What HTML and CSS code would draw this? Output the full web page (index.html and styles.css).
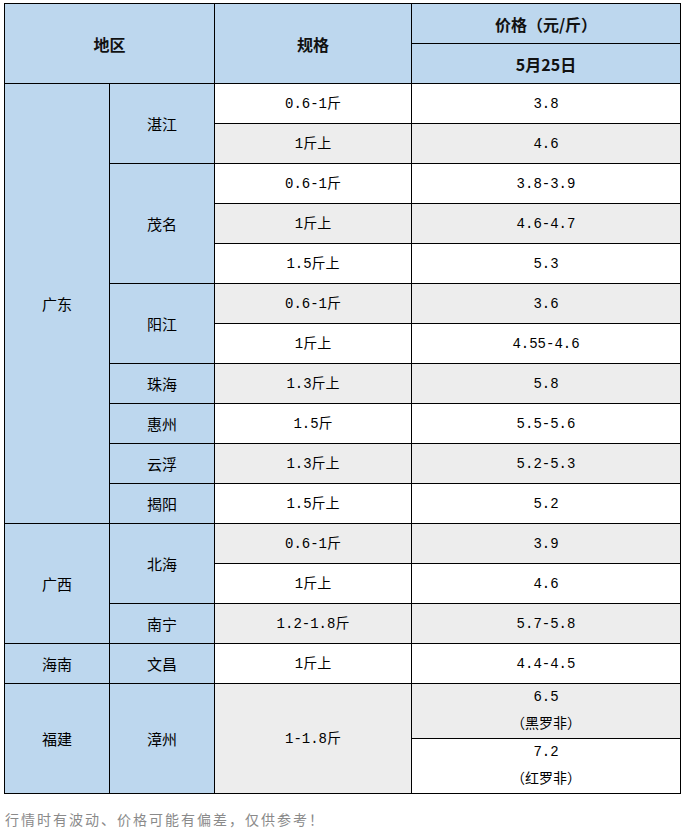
FILE: index.html
```html
<!DOCTYPE html>
<html lang="zh-CN">
<head>
<meta charset="utf-8">
<title>价格表</title>
<link rel="stylesheet" href="styles.css">
</head>
<body>
<table class="price-table">
  <colgroup>
    <col class="c-region">
    <col class="c-city">
    <col class="c-spec">
    <col class="c-price">
  </colgroup>
  <thead>
    <tr>
      <th rowspan="2" colspan="2">地区</th>
      <th rowspan="2">规格</th>
      <th>价格（元/斤）</th>
    </tr>
    <tr>
      <th>5月25日</th>
    </tr>
  </thead>
  <tbody>
    <tr>
      <td class="blue" rowspan="11">广东</td>
      <td class="blue" rowspan="2">湛江</td>
      <td>0.6-1斤</td>
      <td>3.8</td>
    </tr>
    <tr class="gray">
      <td>1斤上</td>
      <td>4.6</td>
    </tr>
    <tr>
      <td class="blue" rowspan="3">茂名</td>
      <td>0.6-1斤</td>
      <td>3.8-3.9</td>
    </tr>
    <tr class="gray">
      <td>1斤上</td>
      <td>4.6-4.7</td>
    </tr>
    <tr>
      <td>1.5斤上</td>
      <td>5.3</td>
    </tr>
    <tr class="gray">
      <td class="blue" rowspan="2">阳江</td>
      <td>0.6-1斤</td>
      <td>3.6</td>
    </tr>
    <tr>
      <td>1斤上</td>
      <td>4.55-4.6</td>
    </tr>
    <tr class="gray">
      <td class="blue">珠海</td>
      <td>1.3斤上</td>
      <td>5.8</td>
    </tr>
    <tr>
      <td class="blue">惠州</td>
      <td>1.5斤</td>
      <td>5.5-5.6</td>
    </tr>
    <tr class="gray">
      <td class="blue">云浮</td>
      <td>1.3斤上</td>
      <td>5.2-5.3</td>
    </tr>
    <tr>
      <td class="blue">揭阳</td>
      <td>1.5斤上</td>
      <td>5.2</td>
    </tr>
    <tr class="gray">
      <td class="blue" rowspan="3">广西</td>
      <td class="blue" rowspan="2">北海</td>
      <td>0.6-1斤</td>
      <td>3.9</td>
    </tr>
    <tr>
      <td>1斤上</td>
      <td>4.6</td>
    </tr>
    <tr class="gray">
      <td class="blue">南宁</td>
      <td>1.2-1.8斤</td>
      <td>5.7-5.8</td>
    </tr>
    <tr>
      <td class="blue">海南</td>
      <td class="blue">文昌</td>
      <td>1斤上</td>
      <td>4.4-4.5</td>
    </tr>
    <tr class="gray tall">
      <td class="blue" rowspan="2">福建</td>
      <td class="blue" rowspan="2">漳州</td>
      <td rowspan="2">1-1.8斤</td>
      <td class="two-line">6.5<br>（黑罗非）</td>
    </tr>
    <tr class="tall">
      <td class="two-line">7.2<br>（红罗非）</td>
    </tr>
  </tbody>
</table>
<p class="note">行情时有波动、价格可能有偏差，仅供参考！</p>
</body>
</html>
```

FILE: styles.css
```css
html, body {
  background: #ffffff;
}

body {
  margin: 3px 0 0 4px;
  font-family: "Liberation Mono", "Noto Sans CJK SC", monospace;
  font-size: 14px;
  color: #000000;
}

.price-table {
  border-collapse: collapse;
  table-layout: fixed;
  width: 677px;
}

.c-region { width: 105px; }
.c-city { width: 105px; }
.c-spec { width: 197px; }
.c-price { width: 269px; }

.price-table th,
.price-table td {
  border: 1px solid #000000;
  padding: 0;
  text-align: center;
  vertical-align: middle;
  line-height: 18px;
}

.price-table tr {
  height: 40px;
}

.price-table tr.tall {
  height: 55px;
}

.price-table th {
  background: #bdd7ee;
  font-family: "Noto Sans CJK SC", sans-serif;
  font-weight: 700;
  font-size: 16px;
  color: #111111;
}

.price-table td {
  background: #ffffff;
}

.price-table tr.gray td {
  background: #ededed;
}

.price-table td.blue,
.price-table tr.gray td.blue {
  background: #bdd7ee;
  font-family: "Noto Sans CJK SC", sans-serif;
  font-size: 15px;
}

.price-table td.two-line {
  line-height: 27px;
}

.note {
  margin: 16px 0 0 1px;
  font-family: "Noto Sans CJK SC", sans-serif;
  font-size: 14px;
  letter-spacing: 2px;
  line-height: 18px;
  color: #8a8a8a;
}
```
